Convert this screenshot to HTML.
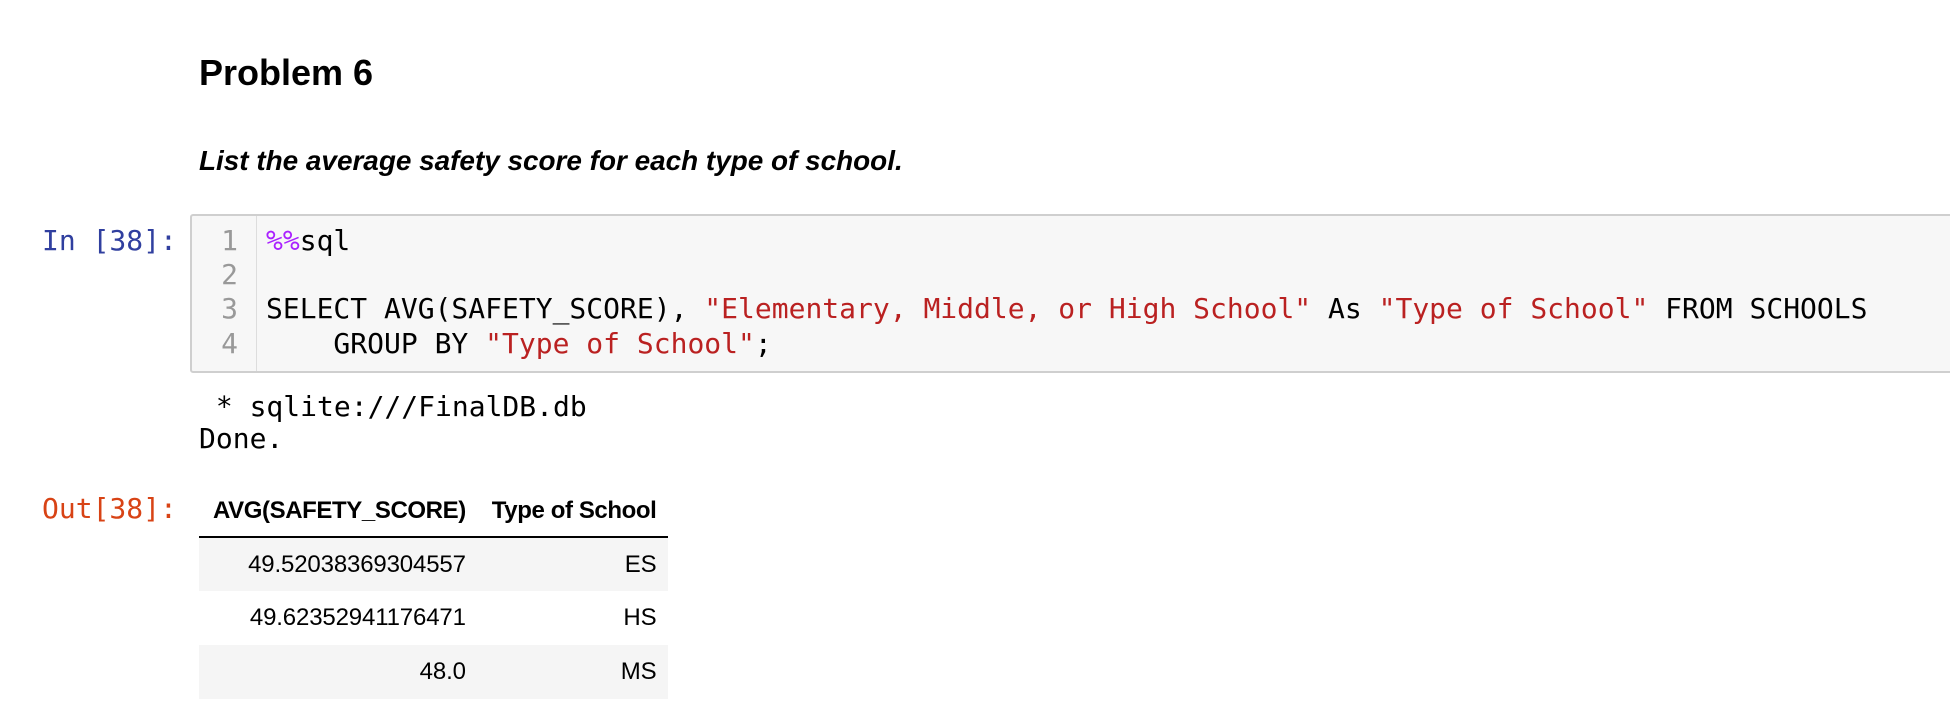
<!DOCTYPE html>
<html><head><meta charset="utf-8"><style>
*{margin:0;padding:0;box-sizing:border-box}
body{width:1950px;height:724px;background:#fff;position:relative;overflow:hidden;font-family:"Liberation Sans",sans-serif;color:#000}
.abs{position:absolute;white-space:pre}
.mono{font-family:"DejaVu Sans Mono","Liberation Mono",monospace;font-size:28px}
h1{position:absolute;left:199px;top:52px;font-size:36px;font-weight:bold}
.q{position:absolute;left:199px;top:145px;font-size:27.9px;font-weight:bold;font-style:italic}
.in{left:42px;top:224px;color:#303f9f}
.out{left:42px;top:492px;color:#d84315}
.box{position:absolute;left:190px;top:214px;width:1770px;height:159px;background:#f7f7f7;border:2px solid #cfcfcf;border-radius:3px}
.gut{position:absolute;left:190px;top:216px;width:67px;height:155px;border-right:1px solid #ddd}
.ln{position:absolute;left:196px;width:42px;text-align:right;color:#999}
.code{left:266px;color:#000}
.s{color:#ba2121}.m{color:#aa22ff}
table{position:absolute;left:199px;top:486px;border-collapse:collapse;font-size:24px}
th{font-weight:bold;text-align:right;padding:0 12px 0 14px;height:51px;border-bottom:2px solid #000;letter-spacing:-0.4px}
td{text-align:right;padding:0 12px 0 14px;height:54px;letter-spacing:-0.15px}
tr.g td{background:#f5f5f5}
</style></head><body>
<h1>Problem 6</h1>
<div class="q">List the average safety score for each type of school.</div>
<div class="abs mono in">In [38]:</div>
<div class="box"></div><div class="gut"></div>
<div class="abs mono ln" style="top:224px">1</div>
<div class="abs mono ln" style="top:258px">2</div>
<div class="abs mono ln" style="top:292px">3</div>
<div class="abs mono ln" style="top:327px">4</div>
<div class="abs mono code" style="top:224px"><span class="m">%%</span>sql</div>
<div class="abs mono code" style="top:292px">SELECT AVG(SAFETY_SCORE), <span class="s">"Elementary, Middle, or High School"</span> As <span class="s">"Type of School"</span> FROM SCHOOLS</div>
<div class="abs mono code" style="top:327px">    GROUP BY <span class="s">"Type of School"</span>;</div>
<div class="abs mono" style="left:199px;top:391px;line-height:32px"> * sqlite:///FinalDB.db
Done.</div>
<div class="abs mono out">Out[38]:</div>
<table>
<tr><th>AVG(SAFETY_SCORE)</th><th>Type of School</th></tr>
<tr class="g"><td>49.52038369304557</td><td>ES</td></tr>
<tr><td>49.62352941176471</td><td>HS</td></tr>
<tr class="g"><td>48.0</td><td>MS</td></tr>
</table>
</body></html>
